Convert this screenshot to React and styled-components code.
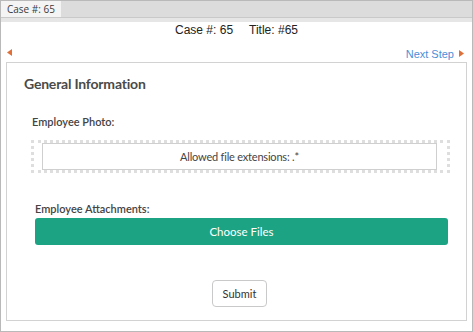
import React from 'react'
import styled, { createGlobalStyle } from 'styled-components'

const GlobalStyle = createGlobalStyle`
  html, body {
    margin: 0;
    padding: 0;
    background: #fff;
  }
  * {
    box-sizing: border-box;
  }
`

const Window = styled.div`
  width: 473px;
  height: 332px;
  border: 1px solid #b9b9b9;
  display: flex;
  flex-direction: column;
  background: #fff;
  overflow: hidden;
`

const TabBar = styled.div`
  height: 17px;
  background: #dcdcdc;
  border-bottom: 1px solid #c9c9c9;
  display: flex;
  align-items: flex-end;
`

const Tab = styled.div`
  height: 16px;
  padding: 0 6px 0 6px;
  background: #f4f4f4;
  font-family: 'Open Sans', sans-serif;
  font-size: 10px;
  line-height: 16px;
  color: #3a3a3a;
`

const Strip = styled.div`
  height: 4px;
  background: #e6e6e6;
`

const Heading = styled.div`
  display: flex;
  justify-content: center;
  gap: 16px;
  margin-top: 1px;
  font-family: 'Liberation Sans', Arial, sans-serif;
  font-size: 12px;
  line-height: 14px;
  color: #222;
`

const Nav = styled.div`
  display: flex;
  justify-content: space-between;
  align-items: center;
  padding: 0 8px 0 6px;
  margin-top: 9px;
  height: 13px;
  font-family: 'Liberation Sans', Arial, sans-serif;
  font-size: 11px;
  color: #4a8fd8;
`

const NextLink = styled.span`
  display: flex;
  align-items: center;
  gap: 5px;
  padding-top: 2px;
`

const Arrow = ({ dir }) => (
  <svg width="5" height="7" viewBox="0 0 5 7">
    {dir === 'left' ? (
      <path d="M5 0 L0 3.5 L5 7 Z" fill="#e0703a" />
    ) : (
      <path d="M0 0 L5 3.5 L0 7 Z" fill="#e0703a" />
    )}
  </svg>
)

const Panel = styled.div`
  margin: 3px 5px 0 5px;
  height: 259px;
  border: 1px solid #d2d2d2;
  padding: 11px 17px 0 17px;
  font-family: 'Lato', sans-serif;
  color: #333;
`

const Title = styled.h2`
  margin: 0;
  font-size: 14px;
  font-weight: 700;
  line-height: 20px;
  letter-spacing: -0.2px;
  color: #4a4a4a;
`

const Label = styled.div`
  margin: ${(p) => p.top}px 0 0 ${(p) => p.indent}px;
  font-size: 11px;
  font-weight: 600;
  line-height: 14px;
  color: #444;
`

const DropZone = styled.div`
  margin: 11px -1px 0 7px;
  border: 3px dotted #dedede;
  padding: 0 10px 0 8px;
`

const FileBox = styled.div`
  height: 27px;
  border: 1px solid #cfcfcf;
  display: flex;
  align-items: center;
  justify-content: center;
  font-size: 11px;
  letter-spacing: -0.2px;
  color: #444;
`

const ChooseButton = styled.button`
  display: block;
  width: 413px;
  height: 27px;
  margin: 2px 0 0 11px;
  border: none;
  border-radius: 3px;
  background: #1ca384;
  color: #fff;
  font-family: 'Lato', sans-serif;
  font-size: 11.5px;
`

const Actions = styled.div`
  display: flex;
  justify-content: center;
  margin-top: 35px;
  padding-left: 6px;
`

const SubmitButton = styled.button`
  height: 27px;
  width: 55px;
  padding: 0;
  border: 1px solid #c9c9c9;
  border-radius: 4px;
  background: #fff;
  color: #333;
  font-family: 'Lato', sans-serif;
  font-size: 11px;
`

const App = () => {
  return (
    <>
      <GlobalStyle />
      <Window>
        <TabBar>
          <Tab>Case #: 65</Tab>
        </TabBar>
        <Strip />
        <Heading>
          <span>Case #: 65</span>
          <span>Title: #65</span>
        </Heading>
        <Nav>
          <Arrow dir="left" />
          <NextLink>
            Next Step <Arrow dir="right" />
          </NextLink>
        </Nav>
        <Panel>
          <Title>General Information</Title>
          <Label top={21} indent={8}>Employee Photo:</Label>
          <DropZone>
            <FileBox>Allowed file extensions: .*</FileBox>
          </DropZone>
          <Label top={29} indent={11}>Employee Attachments:</Label>
          <ChooseButton type="button">Choose Files</ChooseButton>
          <Actions>
            <SubmitButton type="button">Submit</SubmitButton>
          </Actions>
        </Panel>
      </Window>
    </>
  )
}

export default App
